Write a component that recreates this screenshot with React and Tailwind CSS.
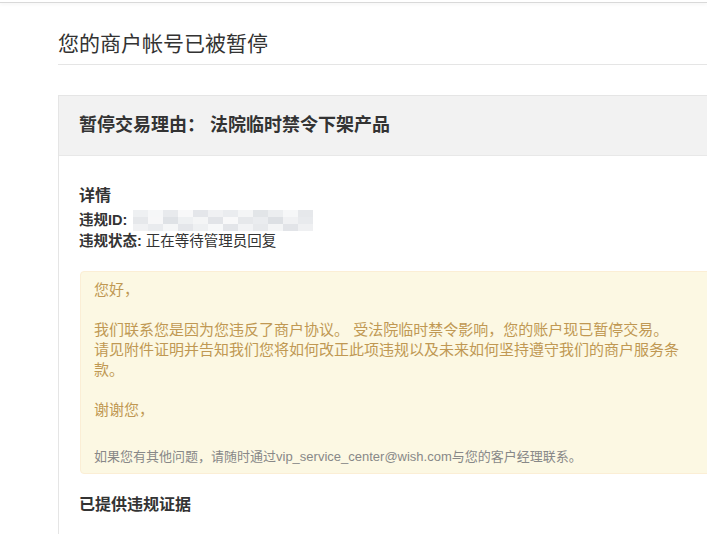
import React from 'react'

const font = { fontFamily: '"Liberation Sans", "Noto Sans CJK SC", sans-serif' }

const mosaic = [
  ['#eef0f2', '#f6f7f8', '#e8eaed', '#f8f8f9', '#e4e6ea', '#f0f1f3', '#eaecef', '#f4f5f6', '#e2e5e8', '#eceef0', '#f6f7f8', '#e6e8eb'],
  ['#e6e8eb', '#f7f7f8', '#dfe2e6', '#eef0f2', '#f4f5f6', '#e2e4e8', '#f8f8f9', '#e6e8eb', '#eaecef', '#dde0e4', '#f0f1f3', '#e8eaed'],
  ['#f0f1f3', '#e9ebee', '#f5f6f7', '#e4e6ea', '#eef0f2', '#f7f8f9', '#e3e5e9', '#f2f3f5', '#e7e9ec', '#f4f5f6', '#e2e4e8', '#eff0f2'],
]

function BlurredId() {
  return (
    <span className="inline-flex flex-col ml-[6px] blur-[0.6px]">
      {mosaic.map((row, i) => (
        <span key={i} className="flex">
          {row.map((c, j) => (
            <span key={j} className="w-[15px] h-[7px]" style={{ background: c }} />
          ))}
        </span>
      ))}
    </span>
  )
}

export default function App() {
  return (
    <div className="min-h-[534px] w-[707px] overflow-hidden bg-white text-[#333]" style={font}>
      <div className="h-[3px] bg-white border-b border-[#d9d9d9] shadow-[0_1px_4px_rgba(0,0,0,0.06)]" />

      <div className="pl-[58px] w-[780px]">
        <div className="pt-[27px] pb-[6px] border-b border-[#e5e5e5]">
          <h1 className="text-[21px] leading-[28px] font-normal text-[#333]">您的商户帐号已被暂停</h1>
        </div>

        <div className="mt-[30px] border border-[#e5e5e5]">
          <div className="h-[60px] bg-[#f2f2f2] flex items-center pl-[20px] border-b border-[#e8e8e8]">
            <h2 className="text-[18px] font-bold text-[#333]">暂停交易理由： 法院临时禁令下架产品</h2>
          </div>

          <div className="pl-[20px] pt-[28px] pb-[40px]">
            <h3 className="text-[16px] leading-[24px] font-bold">详情</h3>
            <div className="text-[14.5px] leading-[21px] mt-[2px]">
              <div className="flex items-center">
                <span className="font-bold">违规ID:</span>
                <BlurredId />
              </div>
              <div>
                <span className="font-bold">违规状态:</span> 正在等待管理员回复
              </div>
            </div>

            <div className="mt-[19px] ml-px w-[660px] bg-[#fcf8e3] border border-[#fbeed5] rounded-[4px] pl-[13px] pr-[55px] pt-[8px] pb-[7px] text-[#c09853] text-[15px] leading-[20px]">
              <p>您好，</p>
              <p className="mt-[20px]">
                我们联系您是因为您违反了商户协议。 受法院临时禁令影响，您的账户现已暂停交易。
                <br />
                请见附件证明并告知我们您将如何改正此项违规以及未来如何坚持遵守我们的商户服务条款。
              </p>
              <p className="mt-[20px]">谢谢您，</p>
              <p className="mt-[28px] text-[13px] leading-[18px] text-[#888]">
                如果您有其他问题，请随时通过vip_service_center@wish.com与您的客户经理联系。
              </p>
            </div>

            <h3 className="mt-[19px] text-[16px] leading-[23px] font-bold">已提供违规证据</h3>
          </div>
        </div>
      </div>
    </div>
  )
}
